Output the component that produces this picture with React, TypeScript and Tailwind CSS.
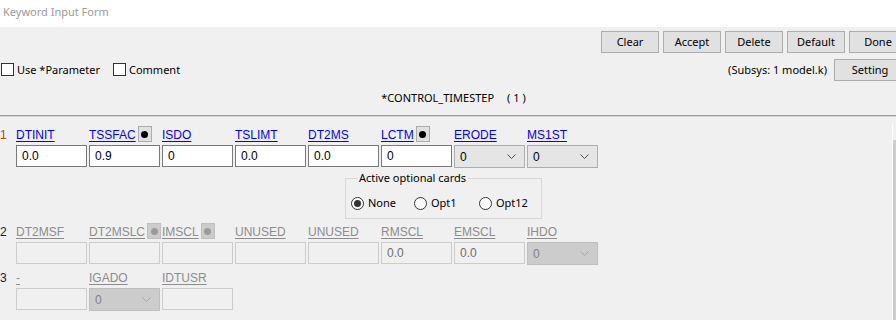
import React from "react";

type Cell = {
  label: string;
  value?: string;
  select?: boolean;
  toggle?: boolean;
};

const row1: Cell[] = [
  { label: "DTINIT", value: "0.0" },
  { label: "TSSFAC", value: "0.9", toggle: true },
  { label: "ISDO", value: "0" },
  { label: "TSLIMT", value: "0.0" },
  { label: "DT2MS", value: "0.0" },
  { label: "LCTM", value: "0", toggle: true },
  { label: "ERODE", value: "0", select: true },
  { label: "MS1ST", value: "0", select: true },
];

const row2: Cell[] = [
  { label: "DT2MSF" },
  { label: "DT2MSLC", toggle: true },
  { label: "IMSCL", toggle: true },
  { label: "UNUSED" },
  { label: "UNUSED" },
  { label: "RMSCL", value: "0.0" },
  { label: "EMSCL", value: "0.0" },
  { label: "IHDO", value: "0", select: true },
];

const row3: Cell[] = [
  { label: "-" },
  { label: "IGADO", value: "0", select: true },
  { label: "IDTUSR" },
];

const Chevron = ({ color }: { color: string }) => (
  <svg width="9" height="5" viewBox="0 0 9 5" fill="none">
    <path d="M0.5 0.5 L4.5 4.5 L8.5 0.5" stroke={color} strokeWidth="1" />
  </svg>
);

const HeadButton = ({ text, w = "w-[58px]" }: { text: string; w?: string }) => (
  <button className={`${w} h-[22px] shrink-0 border border-[#adadad] bg-[#e1e1e1] text-black`}>
    {text}
  </button>
);

const Checkbox = ({ text }: { text: string }) => (
  <label className="flex items-center gap-[3px]">
    <span className="w-[13px] h-[13px] border border-[#333] bg-white" />
    <span className="text-black">{text}</span>
  </label>
);

const Radio = ({ text, checked, w }: { text: string; checked?: boolean; w: string }) => (
  <div className={`flex items-center gap-[4px] ${w}`}>
    <span className="w-[13px] h-[13px] rounded-full border border-[#333] bg-white flex items-center justify-center">
      {checked && <span className="w-[7px] h-[7px] rounded-full bg-[#333]" />}
    </span>
    <span className="text-black">{text}</span>
  </div>
);

// labels and values are drawn in the Arial-like face, like the original grid
const FieldRow = ({ num, cells, enabled }: { num: string; cells: Cell[]; enabled: boolean }) => (
  <div className="flex font-['Liberation_Sans',Arial,sans-serif] text-[12px]">
    <div
      className={`w-[16px] shrink-0 leading-[16px] pt-[1px] ${
        enabled ? "text-[#9a5400]" : "text-[#1a1a3a]"
      }`}
    >
      {num}
    </div>
    <div className="flex gap-[2px]">
      {cells.map((c, i) => (
        <div key={i} className="w-[71px] flex flex-col">
          <div className="h-[19px] flex items-start whitespace-nowrap">
            <span
              className={`leading-[16px] pt-[1px] underline underline-offset-[2px] ${
                enabled ? "text-[#0000ff]" : "text-[#8c8c8c]"
              }`}
            >
              {c.label}
            </span>
            {c.toggle && (
              <span
                className={`ml-[2px] w-[14px] h-[16px] shrink-0 border flex items-center justify-center ${
                  enabled ? "border-[#adadad] bg-[#e1e1e1]" : "border-[#bfbfbf] bg-[#cccccc]"
                }`}
              >
                <span
                  className={`w-[7px] h-[7px] rounded-full ${enabled ? "bg-black" : "bg-[#9a9a9a]"}`}
                />
              </span>
            )}
          </div>
          {c.select ? (
            <div
              className={`h-[23px] border flex items-center justify-between pl-[5px] pr-[8px] ${
                enabled
                  ? "border-[#adadad] bg-[#e5e5e5] text-black"
                  : "border-[#bfbfbf] bg-[#cccccc] text-[#838383]"
              }`}
            >
              <span>{c.value}</span>
              <Chevron color={enabled ? "#505050" : "#a8a8a8"} />
            </div>
          ) : (
            <div
              className={`h-[22px] border flex items-center pl-[5px] ${
                enabled
                  ? "border-[#7a7a7a] bg-white text-black"
                  : "border-[#cccccc] bg-[#f0f0f0] text-[#6d6d6d]"
              }`}
            >
              {c.value}
            </div>
          )}
        </div>
      ))}
    </div>
  </div>
);

export default function App() {
  return (
    <div className="w-[896px] h-[320px] overflow-hidden bg-[#f0f0f0] font-['Noto_Sans','Liberation_Sans',sans-serif] text-[11px] leading-[16px]">
      <div className="h-[27px] bg-white px-[3px] pt-[4px] text-[#9b9b9b]">Keyword Input Form</div>

      <div className="w-[907px]">
        <div className="mt-[4px] flex justify-end gap-[4px]">
          <HeadButton text="Clear" />
          <HeadButton text="Accept" />
          <HeadButton text="Delete" />
          <HeadButton text="Default" />
          <HeadButton text="Done" />
        </div>

        <div className="mt-[6px] h-[21px] flex items-center pl-[1px]">
          <Checkbox text="Use *Parameter" />
          <div className="ml-[13px]">
            <Checkbox text="Comment" />
          </div>
          <div className="ml-auto flex items-center gap-[7px] pr-[1px]">
            <span className="text-black">(Subsys: 1 model.k)</span>
            <HeadButton text="Setting" w="w-[72px]" />
          </div>
        </div>

        <div className="mt-[10px] flex justify-center text-black">
          <span>*CONTROL_TIMESTEP</span>
          <span className="ml-[13px]">( 1 )</span>
        </div>
      </div>

      <div className="mt-[9px] border-t border-[#a0a0a0] border-b border-b-[#d4d4d4]" />

      <div className="flex h-[203px]">
        <div className="w-[892px] pt-[9px]">
          <FieldRow num="1" cells={row1} enabled />

          <fieldset className="mt-[2px] ml-[345px] w-[197px] border border-[#d7d7d7] pl-[5px] pb-[7px]">
            <legend className="ml-[6px] px-[2px] text-black">Active optional cards</legend>
            <div className="mt-[9px] flex items-center">
              <Radio text="None" checked w="w-[63px]" />
              <Radio text="Opt1" w="w-[65px]" />
              <Radio text="Opt12" w="w-auto" />
            </div>
          </fieldset>

          <div className="mt-[4px]">
            <FieldRow num="2" cells={row2} enabled={false} />
          </div>
          <div className="mt-[4px]">
            <FieldRow num="3" cells={row3} enabled={false} />
          </div>
        </div>

        <div className="w-[4px] mt-[6px] border-l border-white flex flex-col">
          <div className="mt-[17px] flex-1 bg-[#cdcdcd]" />
        </div>
      </div>
    </div>
  );
}
